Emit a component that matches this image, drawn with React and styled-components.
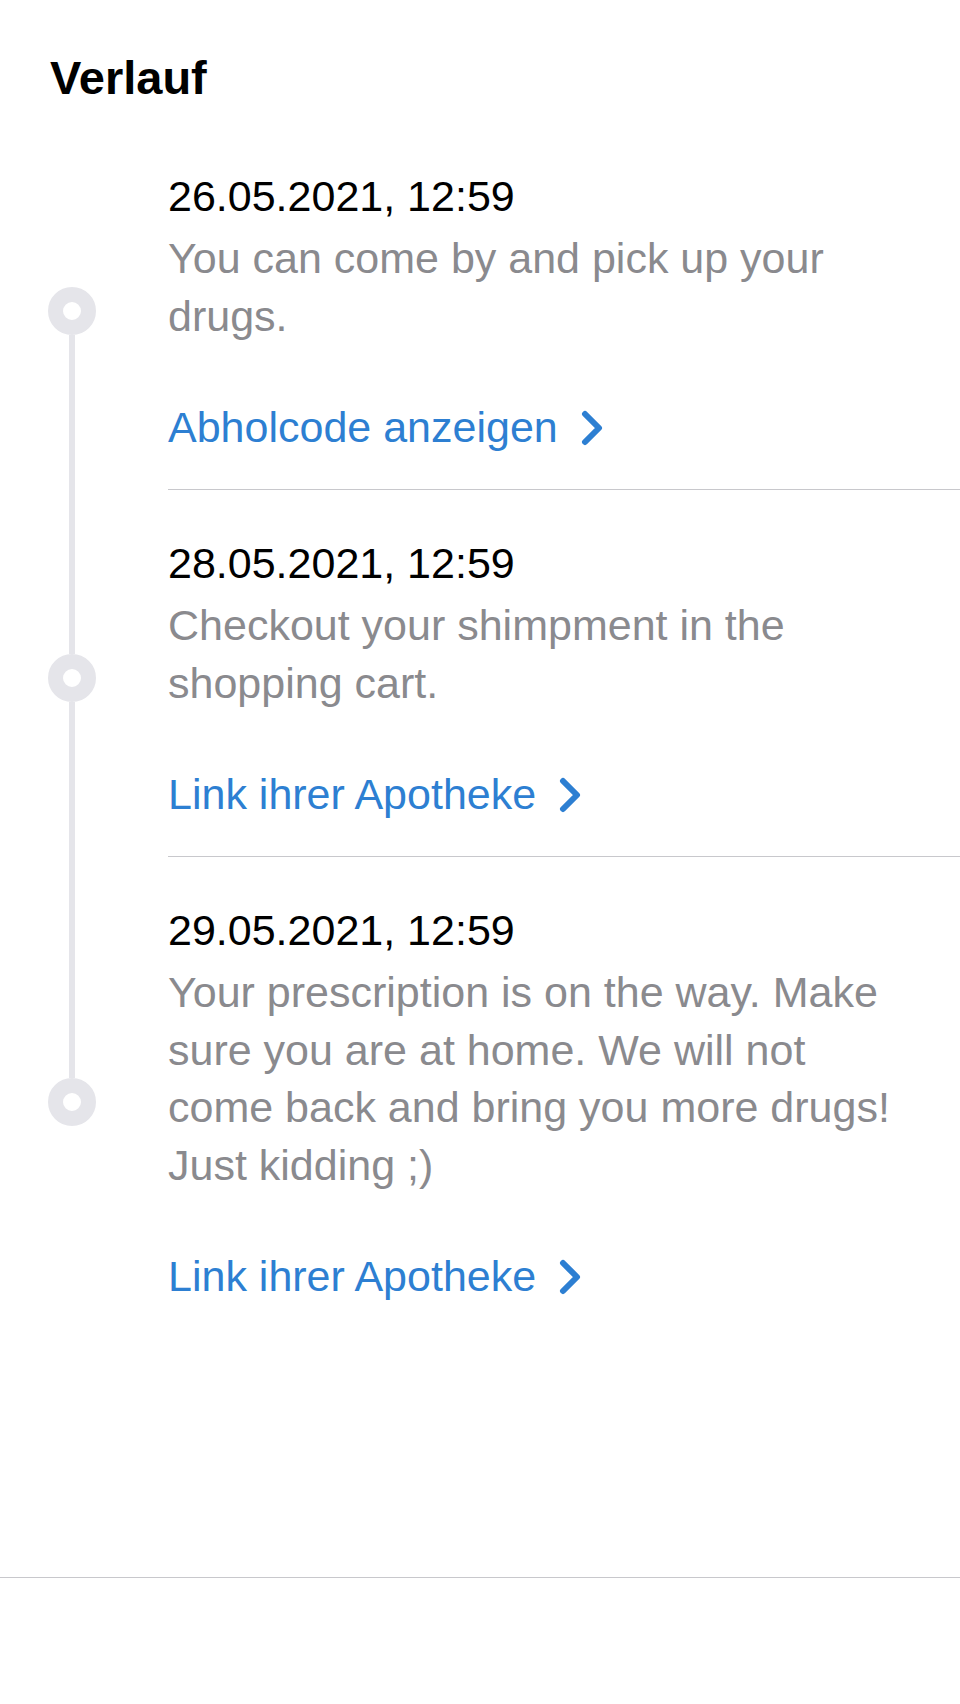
import React from "react";
import styled, { createGlobalStyle } from "styled-components";

const GlobalStyle = createGlobalStyle`
  html, body {
    margin: 0;
    padding: 0;
    background: #fff;
  }
  body {
    font-family: "Liberation Sans", Arial, sans-serif;
    -webkit-font-smoothing: antialiased;
  }
  * {
    box-sizing: border-box;
  }
`;

const Page = styled.div`
  display: flex;
  flex-direction: column;
  height: 1704px;
  background: #fff;
`;

const Main = styled.main`
  flex: 1;
`;

const Header = styled.header`
  padding: 52px 0 19px 50px;
`;

const Title = styled.h1`
  margin: 0;
  font-size: 47px;
  line-height: 52px;
  font-weight: 700;
  color: #000;
`;

const Timeline = styled.ol`
  list-style: none;
  margin: 0;
  padding: 0;
`;

const Row = styled.li`
  display: flex;
`;

// linke Spalte mit Punkt und Linie
const Rail = styled.div`
  width: 144px;
  flex-shrink: 0;
  display: flex;
  flex-direction: column;
  align-items: center;
  margin-right: 24px;
`;

const Segment = styled.div`
  width: 6px;
  flex: ${(p) => (p.$top ? "1 0 8px" : "1 0 0")};
  background: ${(p) => (p.$hidden ? "transparent" : "#e5e5ea")};
`;

const Dot = styled.div`
  width: 48px;
  height: 48px;
  flex-shrink: 0;
  border-radius: 50%;
  border: 15px solid #e5e5ea;
  background: #fff;
`;

const Content = styled.div`
  flex: 1;
  padding: 45px 40px 33px 0;
  border-bottom: ${(p) => (p.$last ? "none" : "1px solid #c8c8cc")};
`;

const DateText = styled.div`
  font-size: 43px;
  line-height: 57.5px;
  color: #000;
`;

const Description = styled.p`
  margin: 4.5px 0 0;
  font-size: 43px;
  line-height: 57.5px;
  color: #8a8a8e;
`;

const LinkRow = styled.a`
  margin-top: 53.5px;
  display: flex;
  align-items: center;
  gap: 23px;
  font-size: 43px;
  line-height: 57.5px;
  color: #2d7fd2;
  text-decoration: none;
  cursor: pointer;
`;

const Chevron = styled.svg`
  width: 22px;
  height: 36px;
  flex-shrink: 0;
  margin-top: 1px;
`;

const Footer = styled.footer`
  height: 127px;
  border-top: 1px solid #c8c8cc;
  background: #fff;
`;

const entries = [
  {
    date: "26.05.2021, 12:59",
    text: "You can come by and pick up your drugs.",
    link: "Abholcode anzeigen",
  },
  {
    date: "28.05.2021, 12:59",
    text: "Checkout your shimpment in the shopping cart.",
    link: "Link ihrer Apotheke",
  },
  {
    date: "29.05.2021, 12:59",
    text: "Your prescription is on the way. Make sure you are at home. We will not come back and bring you more drugs! Just kidding ;)",
    link: "Link ihrer Apotheke",
  },
];

const ChevronRight = () => (
  <Chevron viewBox="0 0 22 36">
    <polyline
      points="4,4 18,18 4,32"
      fill="none"
      stroke="#2d7fd2"
      strokeWidth="6"
      strokeLinecap="round"
      strokeLinejoin="round"
    />
  </Chevron>
);

export default function App() {
  return (
    <>
      <GlobalStyle />
      <Page>
        <Main>
          <Header>
            <Title>Verlauf</Title>
          </Header>
          <Timeline>
            {entries.map((item, index) => {
              const first = index === 0;
              const last = index === entries.length - 1;
              return (
                <Row key={index}>
                  <Rail>
                    <Segment $top $hidden={first} />
                    <Dot />
                    <Segment $hidden={last} />
                  </Rail>
                  <Content $last={last}>
                    <DateText>{item.date}</DateText>
                    <Description>{item.text}</Description>
                    <LinkRow>
                      <span>{item.link}</span>
                      <ChevronRight />
                    </LinkRow>
                  </Content>
                </Row>
              );
            })}
          </Timeline>
        </Main>
        <Footer />
      </Page>
    </>
  );
}
